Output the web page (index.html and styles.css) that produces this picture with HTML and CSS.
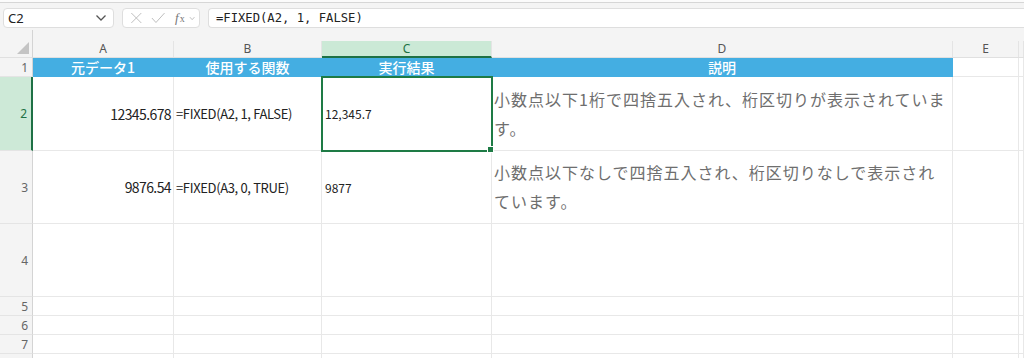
FILE: index.html
```html
<!DOCTYPE html>
<html lang="ja">
<head>
<meta charset="utf-8">
<link rel="stylesheet" href="styles.css">
</head>
<body>
<div class="top"></div>
<div class="fbar">
  <div class="namebox">
    <span class="nb-text">C2</span>
    <svg class="nb-chev" width="12" height="8" viewBox="0 0 12 8"><path d="M1.5 1.5 L6 6 L10.5 1.5" fill="none" stroke="#555" stroke-width="1.3"/></svg>
  </div>
  <div class="fxbox">
    <svg width="14" height="14" viewBox="0 0 14 14"><path d="M1.5 1.5 L12.5 12.5 M12.5 1.5 L1.5 12.5" stroke="#bdbdbd" stroke-width="1.1" fill="none"/></svg>
    <svg width="16" height="14" viewBox="0 0 16 14"><path d="M1 7 L5.5 12 L15 1.5" stroke="#bdbdbd" stroke-width="1.1" fill="none"/></svg>
    <span class="fx"><i>f</i><span class="fx-x">x</span></span>
    <svg class="fx-chev" width="7" height="5" viewBox="0 0 7 5"><path d="M1 1 L3.5 3.8 L6 1" fill="none" stroke="#bbb" stroke-width="1"/></svg>
  </div>
  <div class="formula">=FIXED(A2, 1, FALSE)</div>
</div>
<div class="sheet">
  <div class="corner"><svg width="12" height="12" viewBox="0 0 12 12"><path d="M12 0 L12 12 L0 12 Z" fill="#c4c4c4"/></svg></div>
  <div class="colh"><span>A</span></div>
  <div class="colh"><span>B</span></div>
  <div class="colh sel"><span>C</span></div>
  <div class="colh"><span>D</span></div>
  <div class="colh"><span>E</span></div>
  <div class="colh last"><span></span></div>

  <div class="rowh">1</div>
  <div class="cell head">元データ1</div>
  <div class="cell head">使用する関数</div>
  <div class="cell head">実行結果</div>
  <div class="cell head">説明</div>
  <div class="cell"></div>
  <div class="cell"></div>

  <div class="rowh sel">2</div>
  <div class="cell num">12345.678</div>
  <div class="cell fn">=FIXED(A2, 1, FALSE)</div>
  <div class="cell res active">12,345.7</div>
  <div class="cell desc">小数点以下1桁で四捨五入され、桁区切りが表示されています。</div>
  <div class="cell"></div>
  <div class="cell"></div>

  <div class="rowh">3</div>
  <div class="cell num">9876.54</div>
  <div class="cell fn">=FIXED(A3, 0, TRUE)</div>
  <div class="cell res">9877</div>
  <div class="cell desc">小数点以下なしで四捨五入され、桁区切りなしで表示されています。</div>
  <div class="cell"></div>
  <div class="cell"></div>

  <div class="rowh">4</div>
  <div class="cell"></div><div class="cell"></div><div class="cell"></div><div class="cell"></div><div class="cell"></div><div class="cell"></div>
  <div class="rowh">5</div>
  <div class="cell"></div><div class="cell"></div><div class="cell"></div><div class="cell"></div><div class="cell"></div><div class="cell"></div>
  <div class="rowh">6</div>
  <div class="cell"></div><div class="cell"></div><div class="cell"></div><div class="cell"></div><div class="cell"></div><div class="cell"></div>
  <div class="rowh">7</div>
  <div class="cell"></div><div class="cell"></div><div class="cell"></div><div class="cell"></div><div class="cell"></div><div class="cell"></div>
  <div class="rowh"></div>
  <div class="cell"></div><div class="cell"></div><div class="cell"></div><div class="cell"></div><div class="cell"></div><div class="cell"></div>
</div>
</body>
</html>
```
FILE: styles.css
```css
* { box-sizing: border-box; }
html, body { margin: 0; padding: 0; }
body {
  width: 1024px;
  height: 358px;
  overflow: hidden;
  background: #f4f4f4;
  font-family: "Noto Sans CJK JP", "Noto Sans", sans-serif;
}
.top {
  height: 3px;
  background: #fbfbfb;
  border-bottom: 1px solid #d6d6d6;
}
.fbar {
  display: flex;
  align-items: center;
  height: 27px;
  padding: 3px 0 0 3px;
  gap: 8px;
}
.namebox, .fxbox, .formula {
  height: 20px;
  background: #fff;
  border: 1px solid #dedede;
  border-radius: 4px;
  display: flex;
  align-items: center;
}
.namebox {
  width: 111px;
  padding: 0 6px 0 4px;
  justify-content: space-between;
}
.nb-text {
  font-family: "Noto Sans", sans-serif;
  font-size: 13px;
  color: #222;
}
.fxbox {
  width: 78px;
  padding: 0 4px 0 7px;
  gap: 8px;
}
.fx {
  font-family: "Liberation Serif", serif;
  font-size: 13px;
  color: #777;
  display: flex;
  align-items: baseline;
  margin-left: 2px;
}
.fx-x { font-size: 10px; font-style: normal; margin-left: 1px; }
.fx-chev { margin-left: -4px; }
.formula {
  flex: 1;
  border-right: none;
  border-radius: 4px 0 0 4px;
  padding-left: 7px;
  font-family: "DejaVu Sans Mono", monospace;
  font-size: 12.2px;
  color: #222;
}
.sheet {
  display: grid;
  grid-template-columns: 33px 141px 148px 170px 461px 66px 1fr;
  grid-template-rows: 28px 19px 74px 73px 73px 19px 19px 19px 19px;
  background: #fff;
}
.corner {
  background: #f4f4f4;
  border-right: 1px solid #d4d4d4;
  border-bottom: 1px solid #e0e0e0;
  display: flex;
  align-items: flex-end;
  justify-content: flex-end;
  padding: 0 3px 3px 0;
}
.colh {
  background: #f4f4f4;
  display: flex;
  align-items: flex-end;
  border-bottom: 1px solid #e0e0e0;
}
.colh span {
  flex: 1;
  height: 16px;
  line-height: 16px;
  text-align: center;
  font-family: "Noto Sans", sans-serif;
  font-size: 12px;
  color: #555;
  border-right: 1px solid #e4e4e4;
}
.colh.sel span {
  background: #cbe9d6;
  color: #1e7145;
  height: 17px;
  border-bottom: 2px solid #1e7145;
  line-height: 16px;
}
.colh.sel { border-bottom: none; }
.rowh {
  background: #f4f4f4;
  border-right: 1px solid #d4d4d4;
  border-bottom: 1px solid #e4e4e4;
  display: flex;
  align-items: center;
  justify-content: flex-end;
  padding-right: 4px;
  font-family: "Noto Sans", sans-serif;
  font-size: 12px;
  color: #666;
}
.rowh.sel {
  background: #cde9d7;
  color: #1e7145;
  border-right: 2px solid #1e7145;
}
.cell {
  border-right: 1px solid #e8e8e8;
  border-bottom: 1px solid #e8e8e8;
  display: flex;
  align-items: center;
  font-size: 13px;
  color: #222;
  position: relative;
  min-width: 0;
}
.cell.head {
  background: #44aee2;
  border-right-color: #44aee2;
  border-bottom-color: #44aee2;
  color: #fff;
  justify-content: center;
  font-size: 14px;
  font-weight: 500;
}
.cell.num { justify-content: flex-end; padding-right: 2px; font-size: 14px; letter-spacing: -0.6px; }
.cell.fn { padding-left: 2px; font-size: 13px; letter-spacing: -0.35px; }
.cell.res { padding-left: 3px; font-size: 12px; }
.cell.desc {
  padding-left: 2px;
  padding-right: 6px;
  font-size: 16px;
  letter-spacing: 1px;
  line-height: 29px;
  color: #6e6e6e;
}
.cell.active {
  outline: 2px solid #1e7b45;
  outline-offset: -1px;
  z-index: 1;
}
.cell.active::after {
  content: "";
  position: absolute;
  right: -3px;
  bottom: -3px;
  width: 5px;
  height: 5px;
  background: #1e7b45;
  border: 1px solid #fff;
}
```
